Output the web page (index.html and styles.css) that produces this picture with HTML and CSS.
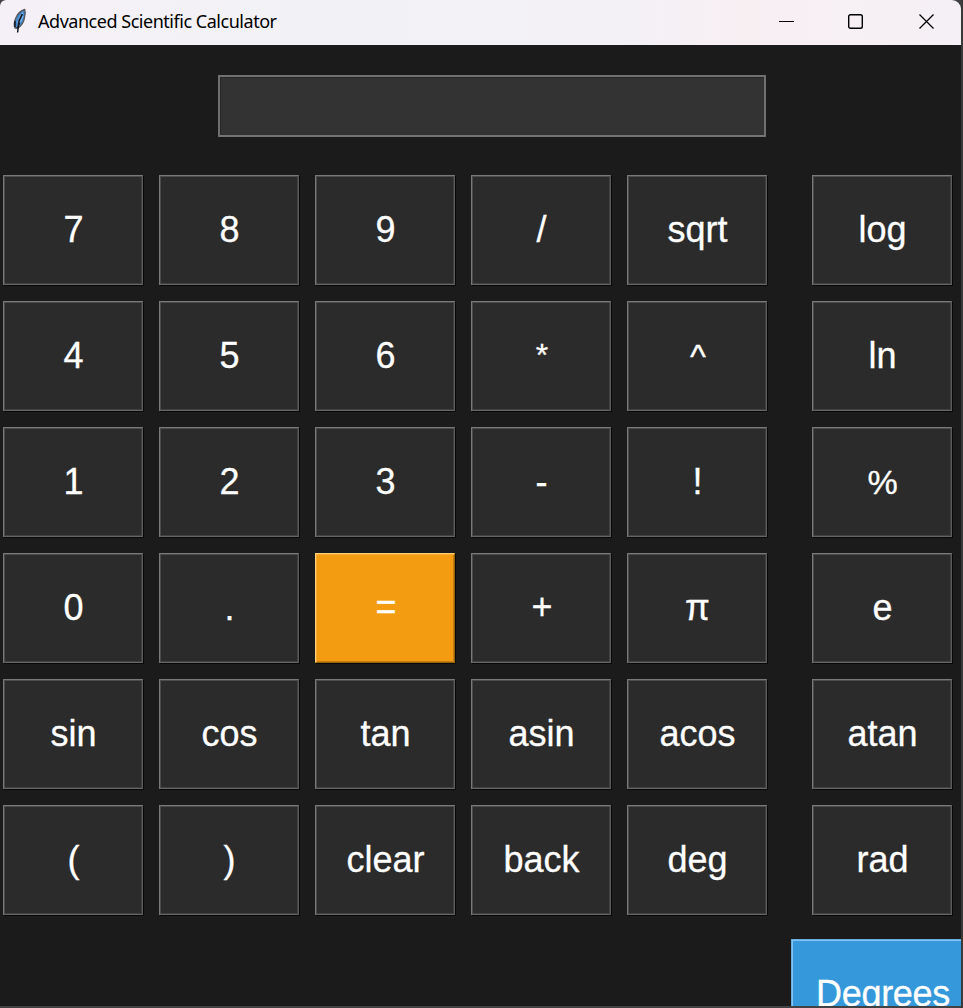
FILE: index.html
```
<!DOCTYPE html>
<html lang="en">
<head>
<meta charset="utf-8">
<title>Advanced Scientific Calculator</title>
<link rel="stylesheet" href="styles.css">
</head>
<body>
<main class="window">
  <header class="titlebar">
    <svg class="feather" width="16" height="26" viewBox="0 0 16 26">
      <path d="M12.700 1.500C9 2.500 6 5 4 9.500C2 13.500 1.800 17 3 20L5.500 20.500C9 18 12 14 12.400 10C13.300 7 13.400 3.500 12.700 1.500Z" fill="#4a87c9" stroke="#55565a" stroke-width="1.300"/>
      <path d="M11 4.500L8 9M8.500 8.500L5.500 15M11 8L8.500 14" fill="none" stroke="#7db2ea" stroke-width="1.200"/>
      <path d="M10.300 6L7 13L5.600 24.500M3 13v6M7.500 15L5.500 20" fill="none" stroke="#111820" stroke-width="1.500"/>
    </svg>
    <span class="title">Advanced Scientific Calculator</span>
    <div class="controls">
      <svg class="minimise" width="16" height="16" viewBox="0 0 16 16"><path d="M0 7.500H15" class="line"/></svg>
      <svg width="16" height="16" viewBox="0 0 16 16"><rect x=".7" y=".7" width="13.600" height="13.600" rx="1.800" class="line box"/></svg>
      <svg width="16" height="16" viewBox="0 0 16 16"><path d="M.5 .5L14.500 14.500M14.500 .5L.5 14.500" class="line cross"/></svg>
    </div>
  </header>
  <div class="display"></div>
  <section class="keys">
    <div class="key">7</div><div class="key">8</div><div class="key">9</div><div class="key">/</div><div class="key">sqrt</div><div class="key last">log</div>
    <div class="key">4</div><div class="key">5</div><div class="key">6</div><div class="key star">*</div><div class="key caret">^</div><div class="key last">ln</div>
    <div class="key">1</div><div class="key">2</div><div class="key">3</div><div class="key">-</div><div class="key">!</div><div class="key last percent">%</div>
    <div class="key">0</div><div class="key">.</div><div class="key equals">=</div><div class="key plus">+</div><div class="key">π</div><div class="key last">e</div>
    <div class="key">sin</div><div class="key">cos</div><div class="key">tan</div><div class="key">asin</div><div class="key">acos</div><div class="key last">atan</div>
    <div class="key">(</div><div class="key">)</div><div class="key">clear</div><div class="key">back</div><div class="key">deg</div><div class="key last">rad</div>
  </section>
  <div class="mode">Degrees</div>
</main>
</body>
</html>
```
FILE: styles.css
```
* { box-sizing: border-box; }
body {
  margin: 0;
  width: 963px;
  height: 1008px;
  overflow: hidden;
  background: linear-gradient(90deg, #404244 0 960px, #3a3a3a 961px);
  font-family: "Liberation Sans", Arial, sans-serif;
}
.window {
  display: flex;
  flex-direction: column;
  width: 961px;
  height: 1006px;
  overflow: hidden;
  background: #1b1b1b;
  border-radius: 6px 9px 0 0;
}
.titlebar {
  display: flex;
  flex: none;
  align-items: center;
  height: 45px;
  padding-left: 12px;
  background: linear-gradient(90deg, #f5f0f7 0%, #f2f2f6 32%, #f3f1f6 65%, #f8eff3 77%, #f5f0f5 100%);
  color: #000;
}
.feather { flex: none; margin-bottom: 3px; }
.title {
  margin-left: 10px;
  padding-bottom: 3px;
  font: 18px/24px "Noto Sans", "Open Sans", sans-serif;
  letter-spacing: -0.47px;
  white-space: nowrap;
}
.controls {
  display: flex;
  gap: 55px;
  margin-left: auto;
  padding: 0 26px 2px 0;
}
.controls svg { display: block; }
.controls .minimise { margin-right: -2px; }
.line { fill: none; stroke: #000; stroke-width: 1; }
.box { stroke-width: 1.4; }
.cross { stroke-width: 1.300; }
.display {
  flex: none;
  width: 548px;
  height: 62px;
  margin: 30px 0 38px 218px;
  background: #333;
  border: 2px solid;
  border-color: #707070 #707070 #747474 #707070;
  box-shadow: inset 1px 1px #262626;
}
.keys {
  display: grid;
  flex: none;
  grid-template-columns: repeat(5, 140px) 169px;
  grid-auto-rows: 110px;
  gap: 16px;
  padding-left: 3px;
}
.key {
  padding: 34px 0 0 1px;
  background: #2b2b2b;
  border: 1px solid;
  border-color: #797979 #5a5a5a #666 #797979;
  box-shadow: inset 1px 1px #4b4b4b, inset -1px -1px #414141, 1px 1px #080808;
  color: #fff;
  font-size: 36px;
  line-height: 40px;
  text-align: center;
  -webkit-text-stroke: 0.3px #fff;
}
.last { margin-left: 29px; }
.star { font-size: 32px; padding-top: 33px; padding-left: 2px; }
.caret { padding-left: 2px; font-size: 34px; }
.percent { font-size: 34px; }
.plus { padding-left: 2px; padding-top: 33px; }
.equals {
  padding: 33px 0 0 2px;
  background: #f39c12;
  border-color: #ffd071 #9b640c #9b640c #ffd071;
  box-shadow: inset 1px 1px #f7ac36, inset -1px -1px #c47e0f, 1px 1px #080808;
}
.mode {
  flex: none;
  width: 171px;
  height: 110px;
  margin: 24px 0 0 791px;
  padding: 34px 0 0 24px;
  background: #3498db;
  border-top: 1px solid #6aaee0;
  border-left: 1px solid #6aaee0;
  box-shadow: inset 1px 1px #82c5f5;
  color: #fff;
  font-size: 36px;
  line-height: 40px;
  letter-spacing: -0.3px;
  white-space: nowrap;
  -webkit-text-stroke: 0.3px #fff;
}
```
